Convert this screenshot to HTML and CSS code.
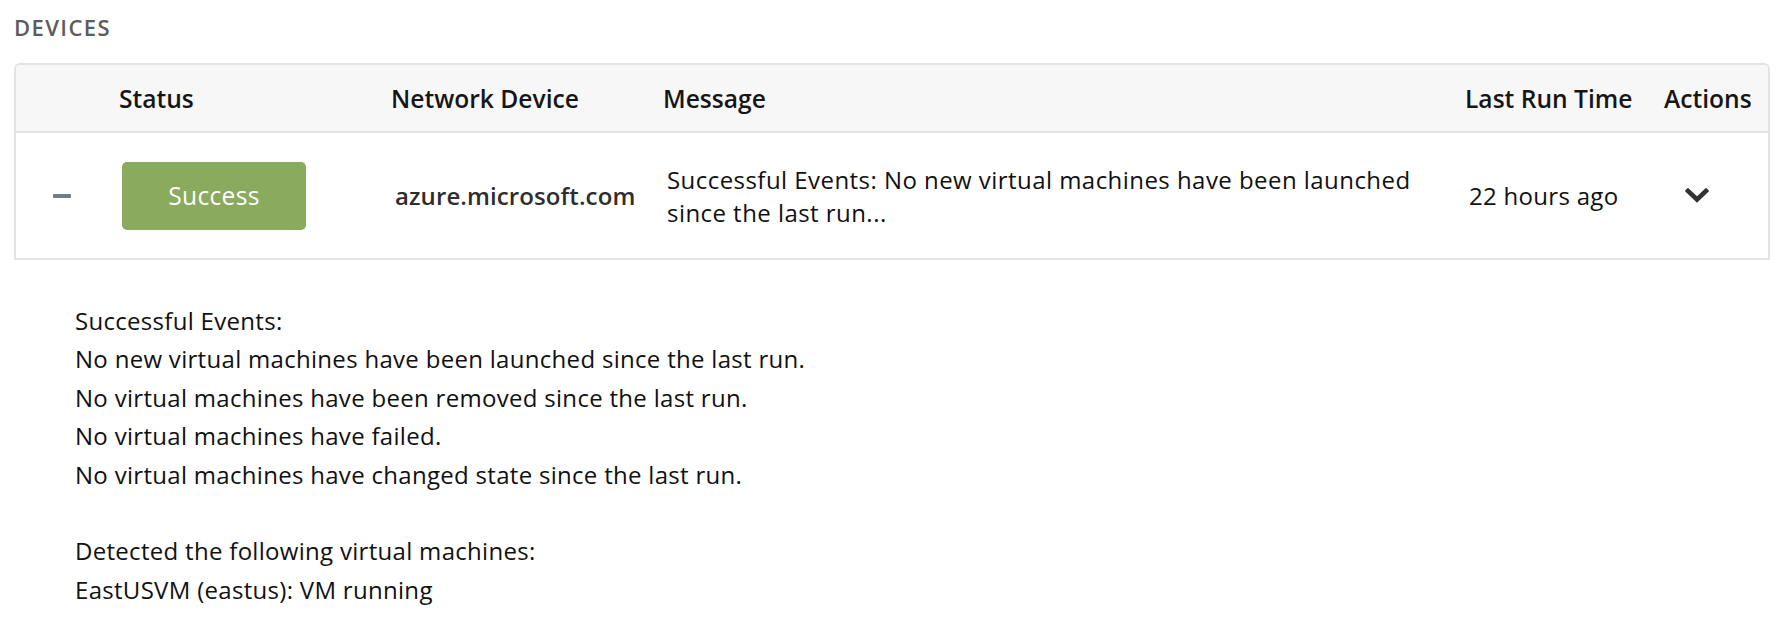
FILE: index.html
```html
<!DOCTYPE html>
<html lang="en">
<head>
<meta charset="utf-8">
<title>Devices</title>
<link rel="stylesheet" href="styles.css">
</head>
<body>
<div class="page">
  <div class="section-label">DEVICES</div>
  <div class="table">
    <div class="row head">
      <div class="cell"></div>
      <div class="cell">Status</div>
      <div class="cell">Network Device</div>
      <div class="cell">Message</div>
      <div class="cell">Last Run Time</div>
      <div class="cell">Actions</div>
    </div>
    <div class="row data">
      <div class="cell toggle"><span class="minus"></span></div>
      <div class="cell status"><span class="badge">Success</span></div>
      <div class="cell device">azure.microsoft.com</div>
      <div class="cell message">Successful Events: No new virtual machines have been launched since the last run...</div>
      <div class="cell time">22 hours ago</div>
      <div class="cell actions">
        <svg class="chevron" width="24" height="15" viewBox="0 0 24 15" aria-hidden="true">
          <path d="M3 3 L12 11.5 L21 3" fill="none" stroke="#333333" stroke-width="4.6" stroke-linecap="square" stroke-linejoin="miter"/>
        </svg>
      </div>
    </div>
  </div>
  <div class="detail">
    <div class="line">Successful Events:</div>
    <div class="line">No new virtual machines have been launched since the last run.</div>
    <div class="line">No virtual machines have been removed since the last run.</div>
    <div class="line">No virtual machines have failed.</div>
    <div class="line">No virtual machines have changed state since the last run.</div>
    <div class="line blank"></div>
    <div class="line">Detected the following virtual machines:</div>
    <div class="line">EastUSVM (eastus): VM running</div>
  </div>
</div>
</body>
</html>
```

FILE: styles.css
```css
html, body {
  margin: 0;
  padding: 0;
  background: #ffffff;
}

body {
  font-family: "Open Sans", "Noto Sans", "Liberation Sans", sans-serif;
  color: #111111;
}

.page {
  padding: 0 8px 0 14px;
}

.section-label {
  margin-top: 12px;
  font-size: 22px;
  line-height: 30px;
  font-weight: 600;
  letter-spacing: 1.4px;
  color: #5c5c5c;
}

.table {
  margin-top: 21px;
  border: 2px solid #e3e3e3;
  border-radius: 6px 6px 0 0;
  overflow: hidden;
}

.row {
  display: grid;
  grid-template-columns: 103px 272px 272px 802px 199px 104px;
  align-items: center;
}

.row.head {
  height: 66px;
  background: #f7f7f7;
  border-bottom: 2px solid #e3e3e3;
  font-size: 24.6px;
  font-weight: 600;
  color: #161616;
}

.row.data {
  height: 125px;
  font-size: 24px;
  letter-spacing: 0.3px;
}

.cell {
  white-space: nowrap;
}

.data .cell {
  padding-left: 4px;
}

.data .toggle {
  padding-left: 37px;
  display: flex;
  align-items: center;
}

.minus {
  display: block;
  width: 18px;
  height: 4px;
  background: #707b8b;
  border-radius: 1px;
}

.data .status {
  padding-left: 3px;
}

.badge {
  display: flex;
  align-items: center;
  justify-content: center;
  width: 184px;
  height: 68px;
  border-radius: 5px;
  background: #8aaa5d;
  color: #ffffff;
  font-size: 24.6px;
  letter-spacing: 0.3px;
}

.device {
  font-weight: 600;
  color: #2e2e2e;
  letter-spacing: 0.1px;
}

.message {
  white-space: normal;
  line-height: 33px;
  letter-spacing: 0.45px;
  padding-right: 20px;
}

.data .actions {
  padding-left: 21px;
  display: flex;
  align-items: center;
}

.chevron {
  display: block;
}

.detail {
  margin-top: 42px;
  padding-left: 61px;
  font-size: 24px;
  line-height: 38.4px;
  letter-spacing: 0.3px;
  color: #111111;
}

.line.blank {
  height: 38.4px;
}
```
